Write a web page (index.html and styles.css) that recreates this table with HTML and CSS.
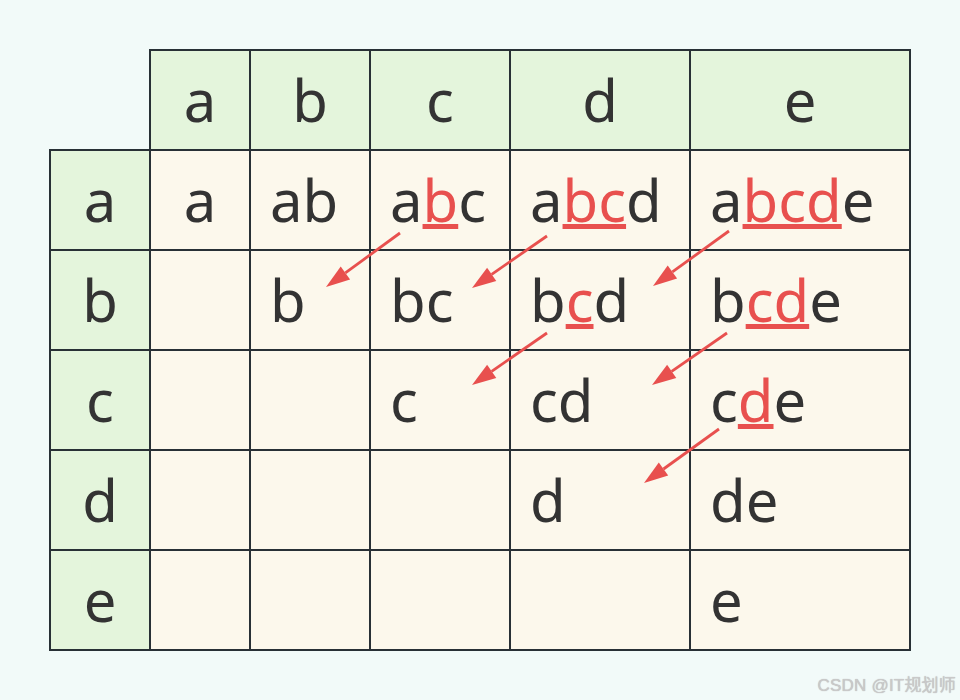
FILE: index.html
```html
<!DOCTYPE html>
<html lang="zh">
<head>
<meta charset="utf-8">
<title>Substring table</title>
<link rel="stylesheet" href="styles.css">
</head>
<body>
<div class="stage">
  <div class="grid">
    <div class="cell corner"></div>
    <div class="cell head">a</div>
    <div class="cell head">b</div>
    <div class="cell head">c</div>
    <div class="cell head">d</div>
    <div class="cell head">e</div>

    <div class="cell head">a</div>
    <div class="cell body center">a</div>
    <div class="cell body">ab</div>
    <div class="cell body">a<span class="hl">b</span>c</div>
    <div class="cell body">a<span class="hl">bc</span>d</div>
    <div class="cell body">a<span class="hl">bcd</span>e</div>

    <div class="cell head">b</div>
    <div class="cell body"></div>
    <div class="cell body">b</div>
    <div class="cell body">bc</div>
    <div class="cell body">b<span class="hl">c</span>d</div>
    <div class="cell body">b<span class="hl">cd</span>e</div>

    <div class="cell head">c</div>
    <div class="cell body"></div>
    <div class="cell body"></div>
    <div class="cell body">c</div>
    <div class="cell body">cd</div>
    <div class="cell body">c<span class="hl">d</span>e</div>

    <div class="cell head">d</div>
    <div class="cell body"></div>
    <div class="cell body"></div>
    <div class="cell body"></div>
    <div class="cell body">d</div>
    <div class="cell body">de</div>

    <div class="cell head">e</div>
    <div class="cell body"></div>
    <div class="cell body"></div>
    <div class="cell body"></div>
    <div class="cell body"></div>
    <div class="cell body">e</div>
  </div>

  <svg class="arrows" width="960" height="700" viewBox="0 0 960 700">
    <g stroke="#e8504e" stroke-width="2.8" fill="none">
      <line x1="400" y1="233" x2="345.4" y2="272.9"/>
      <line x1="547" y1="236" x2="491.7" y2="274.3"/>
      <line x1="729" y1="231" x2="672.4" y2="271.9"/>
      <line x1="547" y1="333" x2="491.7" y2="371.3"/>
      <line x1="727" y1="333" x2="671.7" y2="371.3"/>
      <line x1="719" y1="429" x2="663.5" y2="469"/>
    </g>
    <g fill="#e8504e">
      <polygon points="326,287 350.1,279.4 340.7,266.4"/>
      <polygon points="472,288 496.3,280.9 487.1,267.7"/>
      <polygon points="653,286 677.1,278.4 667.7,265.4"/>
      <polygon points="472,385 496.3,377.9 487.1,364.7"/>
      <polygon points="652,385 676.3,377.9 667.1,364.7"/>
      <polygon points="644,483 668.2,475.5 658.8,462.5"/>
    </g>
  </svg>

  <div class="watermark">CSDN @IT规划师</div>
</div>
</body>
</html>
```

FILE: styles.css
```css
html, body {
  margin: 0;
  padding: 0;
}

body {
  background: #f2faf9;
  font-family: "Noto Sans", "Open Sans", sans-serif;
  color: #333333;
}

.stage {
  position: relative;
  width: 960px;
  height: 700px;
  overflow: hidden;
}

.grid {
  display: inline-grid;
  margin: 49px 0 0 49px;
  padding: 2px;
  gap: 2px;
  background: #283036;
  grid-template-columns: 98px 98px 118px 138px 178px 218px;
  grid-template-rows: repeat(6, 98px);
}

.cell {
  display: flex;
  align-items: center;
  font-size: 58px;
  line-height: 1;
  padding-bottom: 0;
  box-sizing: border-box;
}

.corner {
  background: #f2faf9;
  margin: -2px 0 0 -2px;
}

.head {
  background: #e4f5dc;
  justify-content: center;
}

.body {
  background: #fcf8ec;
  padding-left: 19px;
}

.body.center {
  padding-left: 0;
  justify-content: center;
}

.hl {
  color: #e8504e;
  text-decoration: underline;
  text-decoration-thickness: 5px;
  text-underline-offset: 2px;
  text-decoration-skip-ink: none;
}

.arrows {
  position: absolute;
  left: 0;
  top: 0;
  pointer-events: none;
}

.watermark {
  position: absolute;
  right: 4px;
  top: 671px;
  font-family: "Liberation Sans", "Noto Sans CJK SC", sans-serif;
  font-size: 17px;
  color: #c9c9c9;
  text-shadow: 0 0 1px #b0b0b0;
  letter-spacing: 0.2px;
}
```
